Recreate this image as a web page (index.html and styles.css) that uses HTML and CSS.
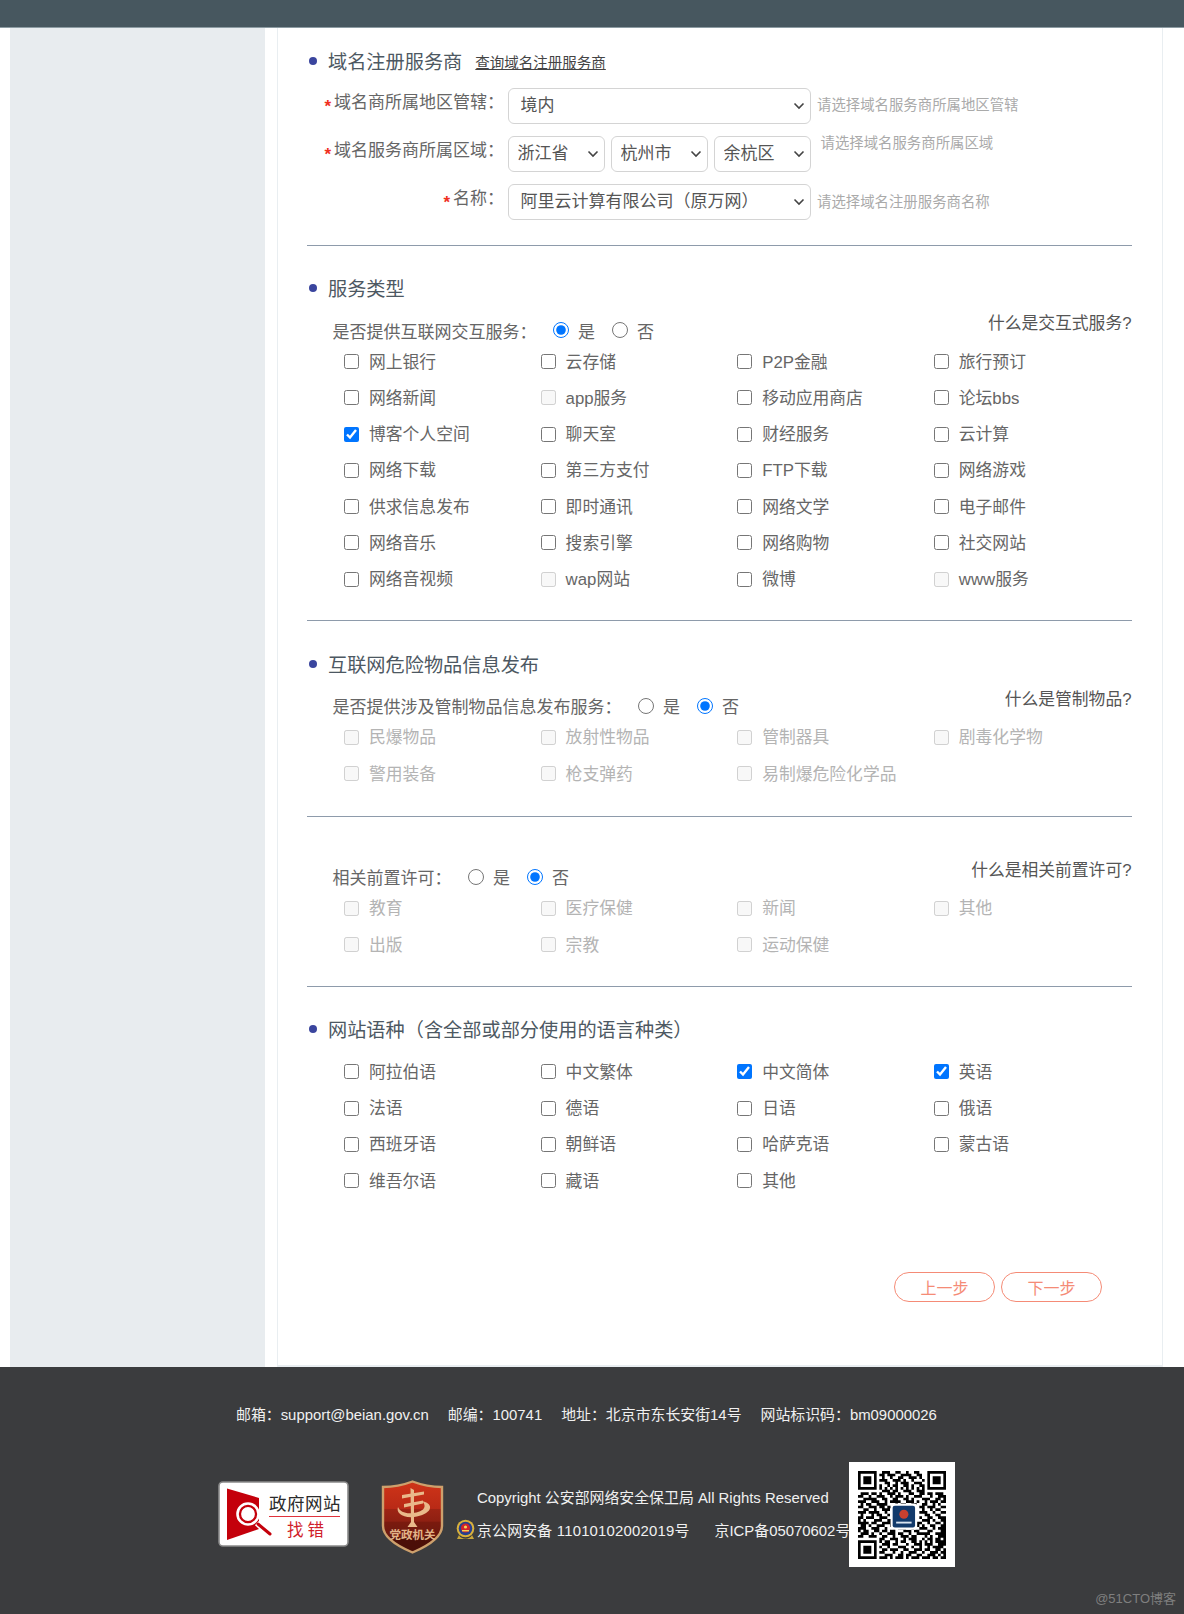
FILE: index.html
```html
<!DOCTYPE html>
<html lang="zh-CN">
<head>
<meta charset="utf-8">
<title>域名注册服务商</title>
<link rel="stylesheet" href="styles.css">
</head>
<body>
<header class="topbar"></header>
<div class="shell">
  <aside class="sidebar"></aside>
  <main class="card">
    <section class="block block-first">
      <h2 class="title"><span class="dot"></span>域名注册服务商<a class="title-link" href="#">查询域名注册服务商</a></h2>
      <div class="form-row">
        <label class="form-label"><span class="star">*</span>域名商所属地区管辖：</label>
        <select class="sel sel-wide"><option>境内</option></select>
        <span class="hint">请选择域名服务商所属地区管辖</span>
      </div>
      <div class="form-row">
        <label class="form-label"><span class="star">*</span>域名服务商所属区域：</label>
        <div class="sel-group">
          <select class="sel sel-mini"><option>浙江省</option></select>
          <select class="sel sel-mini"><option>杭州市</option></select>
          <select class="sel sel-mini"><option>余杭区</option></select>
        </div>
        <span class="hint hint-high">请选择域名服务商所属区域</span>
      </div>
      <div class="form-row">
        <label class="form-label"><span class="star">*</span>名称：</label>
        <select class="sel sel-wide"><option>阿里云计算有限公司（原万网）</option></select>
        <span class="hint hint-low">请选择域名注册服务商名称</span>
      </div>
    </section>

    <section class="block block-service">
      <h2 class="title title-gap"><span class="dot"></span>服务类型</h2>
      <div class="ask">
        <span class="ask-text">是否提供互联网交互服务：</span>
        <label class="radio"><input type="radio" name="a" checked>是</label>
        <label class="radio"><input type="radio" name="a">否</label>
        <a class="what" href="#">什么是交互式服务?</a>
      </div>
      <div class="checks">
        <label class="check"><input type="checkbox">网上银行</label>
        <label class="check"><input type="checkbox">云存储</label>
        <label class="check"><input type="checkbox">P2P金融</label>
        <label class="check"><input type="checkbox">旅行预订</label>
        <label class="check"><input type="checkbox">网络新闻</label>
        <label class="check"><input type="checkbox" disabled>app服务</label>
        <label class="check"><input type="checkbox">移动应用商店</label>
        <label class="check"><input type="checkbox">论坛bbs</label>
        <label class="check"><input type="checkbox" checked>博客个人空间</label>
        <label class="check"><input type="checkbox">聊天室</label>
        <label class="check"><input type="checkbox">财经服务</label>
        <label class="check"><input type="checkbox">云计算</label>
        <label class="check"><input type="checkbox">网络下载</label>
        <label class="check"><input type="checkbox">第三方支付</label>
        <label class="check"><input type="checkbox">FTP下载</label>
        <label class="check"><input type="checkbox">网络游戏</label>
        <label class="check"><input type="checkbox">供求信息发布</label>
        <label class="check"><input type="checkbox">即时通讯</label>
        <label class="check"><input type="checkbox">网络文学</label>
        <label class="check"><input type="checkbox">电子邮件</label>
        <label class="check"><input type="checkbox">网络音乐</label>
        <label class="check"><input type="checkbox">搜索引擎</label>
        <label class="check"><input type="checkbox">网络购物</label>
        <label class="check"><input type="checkbox">社交网站</label>
        <label class="check"><input type="checkbox">网络音视频</label>
        <label class="check"><input type="checkbox" disabled>wap网站</label>
        <label class="check"><input type="checkbox">微博</label>
        <label class="check"><input type="checkbox" disabled>www服务</label>
      </div>
    </section>

    <section class="block block-danger">
      <h2 class="title title-gap"><span class="dot"></span>互联网危险物品信息发布</h2>
      <div class="ask">
        <span class="ask-text">是否提供涉及管制物品信息发布服务：</span>
        <label class="radio"><input type="radio" name="b">是</label>
        <label class="radio"><input type="radio" name="b" checked>否</label>
        <a class="what" href="#">什么是管制物品?</a>
      </div>
      <div class="checks checks-off">
        <label class="check"><input type="checkbox" disabled>民爆物品</label>
        <label class="check"><input type="checkbox" disabled>放射性物品</label>
        <label class="check"><input type="checkbox" disabled>管制器具</label>
        <label class="check"><input type="checkbox" disabled>剧毒化学物</label>
        <label class="check"><input type="checkbox" disabled>警用装备</label>
        <label class="check"><input type="checkbox" disabled>枪支弹药</label>
        <label class="check"><input type="checkbox" disabled>易制爆危险化学品</label>
      </div>
    </section>

    <section class="block block-untitled">
      <div class="ask">
        <span class="ask-text">相关前置许可：</span>
        <label class="radio"><input type="radio" name="c">是</label>
        <label class="radio"><input type="radio" name="c" checked>否</label>
        <a class="what" href="#">什么是相关前置许可?</a>
      </div>
      <div class="checks checks-off">
        <label class="check"><input type="checkbox" disabled>教育</label>
        <label class="check"><input type="checkbox" disabled>医疗保健</label>
        <label class="check"><input type="checkbox" disabled>新闻</label>
        <label class="check"><input type="checkbox" disabled>其他</label>
        <label class="check"><input type="checkbox" disabled>出版</label>
        <label class="check"><input type="checkbox" disabled>宗教</label>
        <label class="check"><input type="checkbox" disabled>运动保健</label>
      </div>
    </section>

    <section class="block block-last">
      <h2 class="title title-tight"><span class="dot"></span>网站语种（含全部或部分使用的语言种类）</h2>
      <div class="checks">
        <label class="check"><input type="checkbox">阿拉伯语</label>
        <label class="check"><input type="checkbox">中文繁体</label>
        <label class="check"><input type="checkbox" checked>中文简体</label>
        <label class="check"><input type="checkbox" checked>英语</label>
        <label class="check"><input type="checkbox">法语</label>
        <label class="check"><input type="checkbox">德语</label>
        <label class="check"><input type="checkbox">日语</label>
        <label class="check"><input type="checkbox">俄语</label>
        <label class="check"><input type="checkbox">西班牙语</label>
        <label class="check"><input type="checkbox">朝鲜语</label>
        <label class="check"><input type="checkbox">哈萨克语</label>
        <label class="check"><input type="checkbox">蒙古语</label>
        <label class="check"><input type="checkbox">维吾尔语</label>
        <label class="check"><input type="checkbox">藏语</label>
        <label class="check"><input type="checkbox">其他</label>
      </div>
      <div class="steps">
        <button class="step" type="button">上一步</button>
        <button class="step" type="button">下一步</button>
      </div>
    </section>
  </main>
</div>

<footer class="footer">
  <div class="contact">
    <span>邮箱：support@beian.gov.cn</span>
    <span>邮编：100741</span>
    <span>地址：北京市东长安街14号</span>
    <span>网站标识码：bm09000026</span>
  </div>
  <div class="foot-row">
    <svg class="badge" viewBox="0 0 131 66" width="131" height="66" aria-label="政府网站找错">
      <rect x="1" y="1" width="129" height="64" rx="4" fill="#fff" stroke="#8b8b8b" stroke-width="1.6"/>
      <path d="M9 7.500 41 17V48L9 59Z" fill="#c4000b"/>
      <circle cx="30" cy="33" r="10.500" fill="#c4000b" stroke="#fff" stroke-width="2.600"/>
      <circle cx="30" cy="33" r="7.600" fill="#fff"/>
      <circle cx="30" cy="33" r="7.600" fill="none" stroke="#c4000b" stroke-width="1.400"/>
      <path d="M39 42 52 54" stroke="#fff" stroke-width="6"/>
      <path d="M40 43 52 53" stroke="#c4000b" stroke-width="3" stroke-linecap="round"/>
      <text class="badge-top" x="51" y="29">政府网站</text>
      <path d="M51 35.500H122" stroke="#e0323c" stroke-width="1.200"/>
      <text class="badge-low" x="69" y="55">找错</text>
    </svg>
    <svg class="shield" viewBox="0 0 63 74" width="63" height="74" aria-label="党政机关">
      <defs>
        <linearGradient id="shieldFill" x1="0" y1="0" x2="0" y2="1">
          <stop offset="0" stop-color="#cf3418"/>
          <stop offset=".38" stop-color="#b92a16"/>
          <stop offset=".39" stop-color="#9d2414"/>
          <stop offset=".56" stop-color="#8f2012"/>
          <stop offset=".57" stop-color="#7b1a0e"/>
          <stop offset=".78" stop-color="#6a1a10"/>
          <stop offset=".79" stop-color="#4c0f08"/>
          <stop offset="1" stop-color="#4a0f08"/>
        </linearGradient>
      </defs>
      <path d="M2 7Q17 7 31.500 1.500Q46 7 61 7V46Q61 60 31.500 72.500Q2 60 2 46Z" fill="url(#shieldFill)" stroke="#cda06c" stroke-width="2.400"/>
      <path d="M29.500 8 33 10 33 42 36.500 47H26.500L30 42Z" fill="#e9b98a"/>
      <path d="M21 15 43 11.500 43 14.500 21 18.500ZM23 24 42 20.500 42 23.500 23 27.500Z" fill="#e9b98a"/>
      <path d="M41 21C55 24 50 35 33 37 21 38 15 33 17 27 19 32 25 34 32 33 42 32 47 27 41 21Z" fill="#e9b98a"/>
      <text class="shield-text" x="31.500" y="59">党政机关</text>
    </svg>
    <div class="legal">
      <p class="legal-line legal-copy">Copyright 公安部网络安全保卫局 All Rights Reserved</p>
      <p class="legal-line">
        <svg class="emblem" viewBox="0 0 19 22" width="19" height="22" aria-hidden="true">
          <path d="M3 16C5 21 14 21 16 16L18 20H1Z" fill="#c9a63a"/>
          <circle cx="9.500" cy="9.500" r="8.800" fill="#d9b23c"/>
          <circle cx="9.500" cy="9.500" r="6.800" fill="#27408f"/>
          <circle cx="9.500" cy="9" r="4.600" fill="#d2232a"/>
          <circle cx="9.500" cy="8" r="1.600" fill="#f4d35a"/>
          <rect x="6" y="11" width="7" height="1.400" fill="#f4d35a"/>
        </svg><span class="legal-a">京公网安备 11010102002019号</span><span class="legal-b">京ICP备05070602号</span>
      </p>
    </div>
    <div class="qr">
      <svg class="qr-code" viewBox="0 0 33 33" width="88" height="88" aria-hidden="true">
        <path fill="none" stroke="#000" d="M0 .5h7M9 .5h3M14 .5h2M18 .5h1M21 .5h2M26 .5h7M0 1.500h1M6 1.500h1M8 1.500h2M11 1.500h3M16 1.500h4M22 1.500h2M26 1.500h1M32 1.500h1M0 2.500h1M2 2.500h3M6 2.500h1M9 2.500h1M12 2.500h1M15 2.500h2M19 2.500h3M23 2.500h1M26 2.500h1M28 2.500h3M32 2.500h1M0 3.500h1M2 3.500h3M6 3.500h1M8 3.500h3M13 3.500h3M17 3.500h1M20 3.500h1M24 3.500h1M26 3.500h1M28 3.500h3M32 3.500h1M0 4.500h1M2 4.500h3M6 4.500h1M10 4.500h2M14 4.500h1M16 4.500h3M21 4.500h3M26 4.500h1M28 4.500h3M32 4.500h1M0 5.500h1M6 5.500h1M8 5.500h1M11 5.500h1M13 5.500h2M17 5.500h2M20 5.500h1M23 5.500h2M26 5.500h1M32 5.500h1M0 6.500h7M8 6.500h1M10 6.500h1M12 6.500h1M14 6.500h1M16 6.500h1M18 6.500h1M20 6.500h1M22 6.500h1M24 6.500h1M26 6.500h7M9 7.500h3M13 7.500h2M17 7.500h3M22 7.500h3M1 8.500h3M5 8.500h2M8 8.500h1M11 8.500h3M15 8.500h1M19 8.500h2M23 8.500h2M26 8.500h2M29 8.500h3M0 9.500h2M4 9.500h1M7 9.500h3M12 9.500h1M14 9.500h3M18 9.500h1M21 9.500h3M27 9.500h1M30 9.500h3M2 10.500h4M6 10.500h1M9 10.500h2M13 10.500h2M17 10.500h2M20 10.500h1M24 10.500h3M29 10.500h2M32 10.500h1M0 11.500h3M5 11.500h3M10 11.500h1M12 11.500h4M18 11.500h3M22 11.500h1M25 11.500h1M27 11.500h3M31 11.500h2M1 12.500h1M3 12.500h2M7 12.500h4M14 12.500h1M16 12.500h2M20 12.500h2M24 12.500h2M28 12.500h1M30 12.500h1M0 13.500h2M4 13.500h3M8 13.500h2M11 13.500h2M23 13.500h2M26 13.500h3M31 13.500h2M2 14.500h2M6 14.500h1M9 14.500h3M24 14.500h1M27 14.500h1M29 14.500h2M0 15.500h3M4 15.500h4M10 15.500h1M23 15.500h3M28 15.500h1M31 15.500h2M1 16.500h1M5 16.500h1M7 16.500h2M11 16.500h1M25 16.500h2M29 16.500h2M0 17.500h2M3 17.500h3M8 17.500h3M23 17.500h1M26 17.500h2M30 17.500h3M0 18.500h1M2 18.500h1M6 18.500h3M11 18.500h2M24 18.500h3M28 18.500h1M31 18.500h2M0 19.500h4M5 19.500h2M9 19.500h4M14 19.500h1M17 19.500h2M21 19.500h3M26 19.500h1M29 19.500h2M32 19.500h1M1 20.500h2M4 20.500h1M7 20.500h3M12 20.500h4M16 20.500h1M19 20.500h4M24 20.500h1M27 20.500h2M31 20.500h2M0 21.500h3M5 21.500h3M10 21.500h1M13 21.500h1M15 21.500h3M20 21.500h1M23 21.500h3M28 21.500h1M30 21.500h3M0 22.500h1M2 22.500h2M6 22.500h2M9 22.500h2M12 22.500h2M17 22.500h3M21 22.500h2M26 22.500h2M31 22.500h2M1 23.500h3M5 23.500h1M8 23.500h1M11 23.500h3M15 23.500h2M19 23.500h1M22 23.500h5M29 23.500h4M0 24.500h2M4 24.500h3M9 24.500h2M13 24.500h1M16 24.500h3M20 24.500h2M25 24.500h1M27 24.500h1M30 24.500h3M8 25.500h2M12 25.500h3M17 25.500h1M19 25.500h3M24 25.500h1M26 25.500h2M29 25.500h2M32 25.500h1M0 26.500h7M8 26.500h1M10 26.500h2M14 26.500h1M16 26.500h2M20 26.500h2M23 26.500h1M25 26.500h1M27 26.500h1M29 26.500h4M0 27.500h1M6 27.500h1M9 27.500h3M13 27.500h2M18 27.500h1M21 27.500h3M25 27.500h3M30 27.500h3M0 28.500h1M2 28.500h3M6 28.500h1M8 28.500h1M11 28.500h1M15 28.500h3M20 28.500h1M23 28.500h1M26 28.500h1M28 28.500h4M0 29.500h1M2 29.500h3M6 29.500h1M9 29.500h2M12 29.500h3M17 29.500h2M21 29.500h3M25 29.500h2M29 29.500h2M32 29.500h1M0 30.500h1M2 30.500h3M6 30.500h1M8 30.500h2M13 30.500h1M16 30.500h1M19 30.500h3M24 30.500h1M27 30.500h3M31 30.500h2M0 31.500h1M6 31.500h1M10 31.500h3M15 31.500h2M18 31.500h2M22 31.500h2M26 31.500h3M30 31.500h1M32 31.500h1M0 32.500h7M8 32.500h3M12 32.500h1M14 32.500h3M18 32.500h1M20 32.500h3M24 32.500h3M28 32.500h2M31 32.500h2"/>
        <rect x="12.200" y="12.200" width="10" height="9.800" rx="1" fill="#fff"/>
        <rect x="13" y="13" width="8.400" height="8.200" rx=".8" fill="#123a6b"/>
        <circle cx="17.200" cy="16.200" r="1.700" fill="#c8402f"/>
        <rect x="14.300" y="19" width="5.800" height=".7" fill="#d8e4f0"/>
      </svg>
    </div>
  </div>
  <span class="watermark">@51CTO博客</span>
</footer>
</body>
</html>
```
FILE: styles.css
```css
* { box-sizing: border-box; }
html, body { margin: 0; padding: 0; }
body {
  background: #fff;
  color: #666;
  font-family: "Liberation Sans", "Noto Sans CJK SC", sans-serif;
  font-size: 16px;
}
.topbar {
  height: 28px;
  background: #47575f;
  border-bottom: 1px solid #8d9ca3;
}
.shell {
  display: flex;
  height: 1339px;
  padding-left: 10px;
}
.sidebar {
  width: 255px;
  background: #e8ecef;
}
.card {
  width: 886px;
  margin-left: 12px;
  padding: 0 30.500px 0 29px;
  border-left: 1px solid #e9eef1;
  border-right: 1px solid #e9eef1;
  border-bottom: 2px solid #e9eef1;
}
.block {
  padding: 27px 0 24.500px;
  border-bottom: 1px solid #8e9bab;
}
.block-first { padding: 17.500px 0 25.500px; }
.block-service { padding-bottom: 23.500px; }
.block-danger { padding: 28px 0 25.500px; }
.block-untitled { padding-top: 47px; padding-bottom: 24px; }
.block-last { padding-top: 27px; border-bottom: 0; }
.title {
  display: flex;
  align-items: center;
  height: 30px;
  margin: 0;
  font-size: 19.200px;
  font-weight: 400;
  color: #4d5862;
}
.title-gap { margin-bottom: 14.500px; }
.title-tight { margin-bottom: 9px; }
.dot {
  width: 8px;
  height: 8px;
  margin: 0 11px 0 2px;
  border-radius: 50%;
  background: #3a459e;
}
.title-link {
  margin: 2px 0 0 13px;
  font-size: 14.500px;
  color: #444;
  text-decoration: underline;
}
.form-row {
  display: flex;
  align-items: flex-start;
  margin-top: 12px;
}
.form-label {
  width: 197px;
  margin-right: 3.500px;
  line-height: 29px;
  font-size: 17px;
  text-align: right;
  color: #666;
}
.star {
  margin-right: 3px;
  color: #f0301e;
  font-size: 17px;
  font-weight: 700;
  line-height: 1;
  vertical-align: -4px;
}
.sel {
  appearance: none;
  height: 36px;
  padding: 0 24px 0 12px;
  border: 1px solid #d4d4d4;
  border-radius: 6px;
  background: #fff url("data:image/svg+xml,%3Csvg xmlns='http://www.w3.org/2000/svg' width='12' height='8' viewBox='0 0 12 8'%3E%3Cpath d='M1.500 1.500 6 6l4.500-4.500' fill='none' stroke='%23444' stroke-width='1.600'/%3E%3C/svg%3E") no-repeat right 5px center;
  color: #555;
  font-family: inherit;
  font-size: 17px;
}
.sel-wide { width: 303px; }
.sel-group {
  display: flex;
  justify-content: space-between;
  width: 303px;
}
.sel-mini { width: 97px; padding-left: 9px; }
.hint {
  margin: 7px 0 0 6.500px;
  font-size: 14.400px;
  line-height: 20px;
  color: #aaa;
}
.hint-high { margin: -3px 0 0 10px; line-height: 20px; }
.hint-low { margin-top: 8px; }
.ask {
  display: flex;
  align-items: center;
  height: 25px;
  padding-left: 25.500px;
  font-size: 17px;
}
.ask-text { margin-right: 16.500px; }
.radio {
  display: flex;
  align-items: center;
  margin-right: 17px;
}
.radio input {
  width: 16px;
  height: 16px;
  margin: 0 9px 0 0;
}
.what {
  margin: -16px 0 0 auto;
  font-size: 16.800px;
  color: #555;
  text-decoration: none;
}
.checks {
  display: grid;
  grid-template-columns: repeat(4, 196.600px);
  grid-auto-rows: 36.250px;
  padding-left: 37px;
}
.check {
  display: flex;
  align-items: center;
  font-size: 16.800px;
  color: #666;
}
.check input {
  width: 15px;
  height: 15px;
  margin: 2px 10px 0 0;
}
.checks-off .check { color: #b4b4b4; }
.steps {
  display: flex;
  justify-content: flex-end;
  gap: 6px;
  margin-top: 74px;
  padding-right: 29.500px;
}
.step {
  width: 101px;
  height: 30px;
  padding: 0;
  border: 1px solid #f58b76;
  border-radius: 15px;
  background: #fff;
  color: #f58b76;
  font-family: inherit;
  font-size: 16px;
}
.footer {
  position: relative;
  height: 247px;
  padding-top: 33px;
  background: #3b3c3e;
  color: #f0f0f0;
  font-size: 14.900px;
}
.contact {
  display: flex;
  gap: 19px;
  height: 30px;
  padding-left: 236px;
  line-height: 30px;
}
.foot-row {
  display: flex;
  align-items: flex-start;
  margin-top: 32px;
  padding-left: 218px;
}
.badge { margin-top: 19px; flex: none; }
.badge-top {
  font-size: 17.500px;
  letter-spacing: .5px;
  fill: #2b2b2b;
}
.badge-low {
  font-size: 16.500px;
  letter-spacing: 4px;
  fill: #d0202a;
}
.shield { margin: 18px 0 0 32px; flex: none; }
.shield-text {
  font-size: 11.500px;
  font-weight: 700;
  text-anchor: middle;
  fill: #e2b388;
}
.legal {
  flex: none;
  width: 393px;
  margin: 18px 0 0 12px;
  white-space: nowrap;
}
.legal-line {
  display: flex;
  align-items: center;
  height: 33px;
  margin: 0;
}
.legal-copy { padding-left: 21px; }
.emblem { margin-right: 2px; flex: none; }
.legal-a { margin-right: 25px; letter-spacing: .2px; }
.qr {
  position: relative;
  display: flex;
  align-items: center;
  justify-content: center;
  flex: none;
  width: 106px;
  height: 105px;
  background: #fff;
}
.qr-code { filter: blur(.3px); }
.watermark {
  position: absolute;
  right: 8px;
  bottom: 7px;
  font-size: 13px;
  color: #7f7f7f;
}
```
